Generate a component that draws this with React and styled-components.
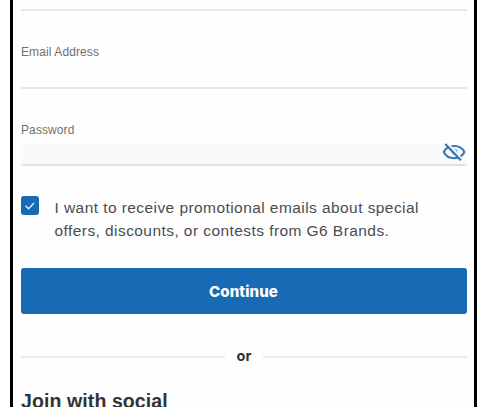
import React, { useState } from 'react';
import styled, { createGlobalStyle } from 'styled-components';

const GlobalStyle = createGlobalStyle`
  * {
    box-sizing: border-box;
  }

  body {
    margin: 0;
    background: #fff;
    overflow: hidden;
    font-family: 'Liberation Sans', Arial, sans-serif;
  }
`;

const Frame = styled.div`
  width: 467px;
  height: 407px;
  margin-left: 10px;
  padding: 0 7px 0 8px;
  border: solid #000;
  border-width: 0 3px;
  background: #fefefe;
  overflow: hidden;
`;

const Field = styled.label`
  display: flex;
  flex-direction: column;
  height: ${(props) => props.$height}px;
  border-bottom: 2px solid ${(props) => (props.$filled ? '#e0e2e6' : '#e6e6e6')};
`;

const Label = styled.span`
  margin-top: 34px;
  color: #707070;
  font-size: 12px;
  line-height: 14px;
  letter-spacing: 0.1px;
`;

const PasswordRow = styled.span`
  display: flex;
  align-items: flex-start;
  justify-content: flex-end;
  height: 21px;
  margin-top: auto;
  padding-right: 1px;
  background: #fafafa;
`;

const Consent = styled.div`
  display: flex;
  align-items: flex-start;
  margin-top: 30px;
`;

const Checkbox = styled.span`
  display: flex;
  align-items: center;
  justify-content: center;
  width: 18px;
  height: 19px;
  border-radius: 3px;
  background: #176ab3;
`;

const ConsentText = styled.span`
  display: flex;
  flex-direction: column;
  margin-left: 15.5px;
  color: #4c4c50;
  font-size: 15.5px;
  line-height: 23px;
  letter-spacing: 0.43px;
  white-space: nowrap;
`;

const Button = styled.button`
  display: block;
  width: 446px;
  height: 46px;
  margin-top: 26px;
  padding: 0 1px 0 0;
  border: 0;
  border-radius: 3px;
  background: #176ab3;
  color: #fff;
  font: 800 15px Inter, sans-serif;
  letter-spacing: 0.1px;
`;

const Divider = styled.div`
  display: flex;
  align-items: center;
  height: 20px;
  margin-top: 32px;
  color: #333;
  font: bold 14.5px/20px Inter, sans-serif;

  &::before,
  &::after {
    content: '';
    flex: 1;
    height: 2px;
    margin-top: 1px;
    background: #ebebeb;
  }
`;

const Or = styled.span`
  width: 38px;
  text-align: center;
`;

const Heading = styled.h2`
  margin: 23px 0 0;
  color: #333;
  font: bold 19.5px/24px 'Liberation Sans', Arial, sans-serif;
  letter-spacing: 0.1px;
  white-space: nowrap;
`;

const EyeOff = () => (
  <svg width='24' height='20' viewBox='0 0 24 20' fill='none' stroke='#3577b5'>
    <path
      d='M1.8 9C3.7 4.800 7.5 2.9 12.1 2.9S20.5 4.8 22.4 9c-2 4.3-5.7 6.2-10.3 6.2S3.8 13.3 1.8 9z'
      strokeWidth='2'
    />
    <circle cx='12.5' cy='8.5' r='2.5' stroke='#91b5d8' strokeWidth='1.2' />
    <path d='M4.5 0l15 16.5' stroke='#fafafa' strokeWidth='2.8' />
    <path d='M3.3 1l15.5 16.3' strokeWidth='2.2' />
  </svg>
);

const Check = () => (
  <svg width='12' height='10' viewBox='0 0 12 10' fill='none' stroke='#d8edff'>
    <path d='M1.5 4.7l3.1 3 5.4-5.7' strokeWidth='1.5' />
  </svg>
);

const App = () => {
  const [checked, setChecked] = useState(true);

  return (
    <>
      <GlobalStyle />
      <Frame>
        <Field $height={11} />
        <Field $height={78}>
          <Label>Email Address</Label>
        </Field>
        <Field $height={77} $filled>
          <Label>Password</Label>
          <PasswordRow>
            <EyeOff />
          </PasswordRow>
        </Field>
        <Consent onClick={() => setChecked(!checked)}>
          <Checkbox>{checked && <Check />}</Checkbox>
          <ConsentText>
            <span>I want to receive promotional emails about special</span>
            <span>offers, discounts, or contests from G6 Brands.</span>
          </ConsentText>
        </Consent>
        <Button>Continue</Button>
        <Divider>
          <Or>or</Or>
        </Divider>
        <Heading>Join with social</Heading>
      </Frame>
    </>
  );
};

export default App;
